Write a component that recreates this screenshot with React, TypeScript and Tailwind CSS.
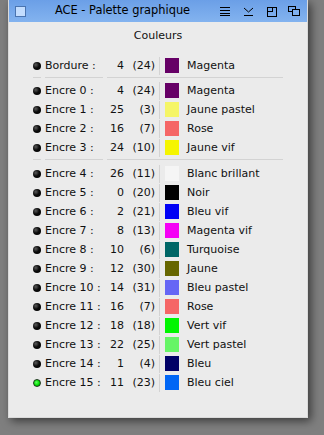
import React from "react";

type Row = { label: string; n: string; p: string; color: string; name: string; dot?: string };

const top: Row = { label: "Bordure :", n: "4", p: "(24)", color: "#660066", name: "Magenta" };
const g1: Row[] = [
  { label: "Encre 0 :", n: "4", p: "(24)", color: "#660066", name: "Magenta" },
  { label: "Encre 1 :", n: "25", p: "(3)", color: "#f5f566", name: "Jaune pastel" },
  { label: "Encre 2 :", n: "16", p: "(7)", color: "#f56666", name: "Rose" },
  { label: "Encre 3 :", n: "24", p: "(10)", color: "#f5f500", name: "Jaune vif" },
];
const g2: Row[] = [
  { label: "Encre 4 :", n: "26", p: "(11)", color: "#f5f5f5", name: "Blanc brillant" },
  { label: "Encre 5 :", n: "0", p: "(20)", color: "#000000", name: "Noir" },
  { label: "Encre 6 :", n: "2", p: "(21)", color: "#0000f5", name: "Bleu vif" },
  { label: "Encre 7 :", n: "8", p: "(13)", color: "#f500f5", name: "Magenta vif" },
  { label: "Encre 8 :", n: "10", p: "(6)", color: "#006666", name: "Turquoise" },
  { label: "Encre 9 :", n: "12", p: "(30)", color: "#666600", name: "Jaune" },
  { label: "Encre 10 :", n: "14", p: "(31)", color: "#6666f5", name: "Bleu pastel" },
  { label: "Encre 11 :", n: "16", p: "(7)", color: "#f56666", name: "Rose" },
  { label: "Encre 12 :", n: "18", p: "(18)", color: "#00f500", name: "Vert vif" },
  { label: "Encre 13 :", n: "22", p: "(25)", color: "#66f566", name: "Vert pastel" },
  { label: "Encre 14 :", n: "1", p: "(4)", color: "#000066", name: "Bleu" },
  { label: "Encre 15 :", n: "11", p: "(23)", color: "#0066f5", name: "Bleu ciel", dot: "green" },
];

function Dot({ green }: { green?: boolean }) {
  return (
    <div
      className={
        green
          ? "w-[8px] h-[8px] rounded-full bg-[radial-gradient(circle_at_40%_40%,#60ff60,#00e000_55%,#007000)] border border-[#1a3a1a]"
          : "w-[8px] h-[8px] rounded-full bg-[radial-gradient(circle_at_35%_35%,#5a5a5a,#0a0a0a_45%,#000)]"
      }
    />
  );
}

function RowView({ r }: { r: Row }) {
  return (
    <div className="flex items-center h-[19px]">
      <div className="w-[8px] flex justify-center">
        <Dot green={r.dot === "green"} />
      </div>
      <div className="w-[62px] pl-[4px] whitespace-nowrap">{r.label}</div>
      <div className="w-[21px] text-right">{r.n}</div>
      <div className="w-[31px] text-right">{r.p}</div>
      <div className="w-[4px]" />
      <div className="w-[1px] h-[18px] bg-[#d3d3d3]" />
      <div className="w-[5px]" />
      <div className="w-[14px] h-[15px]" style={{ backgroundColor: r.color }} />
      <div className="pl-[8px] whitespace-nowrap">{r.name}</div>
    </div>
  );
}

function Sep({ h }: { h: string }) {
  return (
    <div className={h === "7" ? "h-[7px] pt-[2px]" : "h-[6px] pt-[2px]"}>
      <div className="flex h-[1px]">
        <div className="w-[8px] bg-[#d3d3d3]" />
        <div className="w-[4px]" />
        <div className="w-[58px] bg-[#d3d3d3]" />
        <div className="w-[4px]" />
        <div className="w-[176px] bg-[#d3d3d3]" />
      </div>
    </div>
  );
}

export default function App() {
  return (
    <div className="w-[324px] h-[435px] bg-[#7f7f7f] overflow-hidden" style={{ fontFamily: '"DejaVu Sans", sans-serif' }}>
      <div className="ml-[8px] w-[300px] h-[418px] bg-[#ebebeb] flex flex-col shadow-[3px_3px_9px_rgba(0,0,0,0.55)] border-l border-r border-b border-[#dadada]">
        <div className="h-[22px] bg-gradient-to-b from-[#6b9fe7] to-[#83b3ef] flex items-center relative">
          <div className="ml-[6px] w-[11px] h-[11px] bg-[#c3ddfe] border border-[#4a74b0]" />
          <div className="ml-[29px] text-[11.4px] text-black whitespace-nowrap leading-none">ACE - Palette graphique</div>
          <svg className="absolute left-0 top-0" width="300" height="22" viewBox="0 0 300 22" fill="none" stroke="#000" strokeWidth="1" shapeRendering="crispEdges">
            <path d="M211 7.5H221M211 10.5H221M211 13.5H221M211 15.5H221" />
            <path d="M235 8L239.5 12L244 8" shapeRendering="auto" />
            <path d="M235 15.5H244" />
            <rect x="258.5" y="7.5" width="9" height="9" />
            <path d="M263.5 7.5V11.5H258.5" />
            <rect x="279.5" y="6.5" width="7" height="5" />
            <rect x="283.5" y="9.5" width="7" height="6" strokeWidth="1.6" fill="#7fb0ee" />
          </svg>
        </div>
        <div className="text-[11px] text-[#111] pt-[5px]">
          <div className="text-center leading-[17px]">Couleurs</div>
          <div className="pl-[24px] mt-[12px] leading-[19px]">
            <RowView r={top} />
            <Sep h="6" />
            {g1.map((r, i) => (
              <RowView key={"a" + i} r={r} />
            ))}
            <Sep h="7" />
            {g2.map((r, i) => (
              <RowView key={"b" + i} r={r} />
            ))}
          </div>
        </div>
      </div>
    </div>
  );
}
